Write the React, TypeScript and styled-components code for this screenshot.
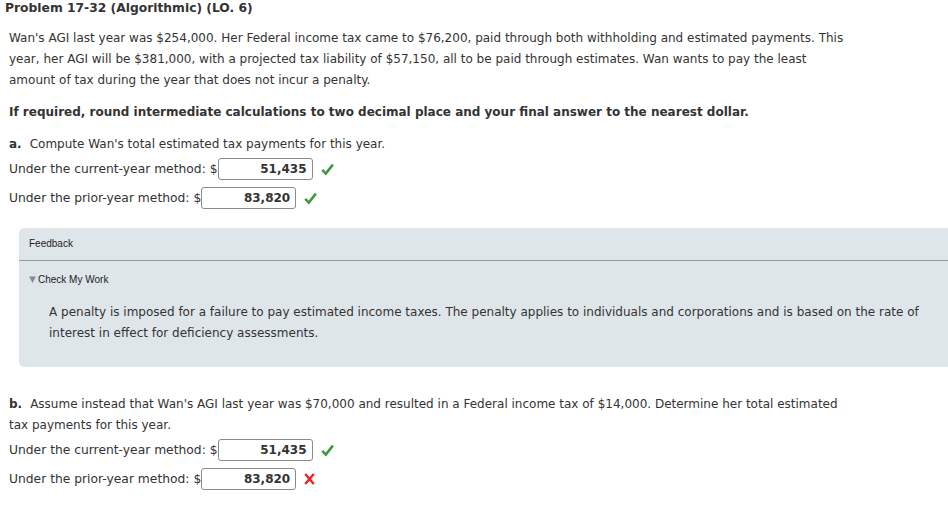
import styled, { createGlobalStyle } from 'styled-components'

const GlobalStyle = createGlobalStyle`
  html, body {
    margin: 0;
    padding: 0;
    background: #ffffff;
    overflow: hidden;
  }
  body {
    font-family: Verdana, "DejaVu Sans", sans-serif;
    color: #333333;
    font-size: 12px;
  }
`

const Page = styled.div`
  width: 948px;
  height: 507px;
  overflow: hidden;
`

const Title = styled.h1`
  margin: 0;
  padding: 1px 0 0 5px;
  font-size: 12.3px;
  line-height: 14px;
  font-weight: bold;
  color: #333333;
`

const Body = styled.div`
  padding: 0 0 0 9px;
`

const Paragraph = styled.p<{ $top?: number; $width?: number }>`
  margin: ${props => props.$top ?? 0}px 0 0 0;
  max-width: ${props => props.$width ?? 840}px;
  line-height: 21px;
  font-size: 12px;
`

const Bold = styled.span`
  font-weight: bold;
`

const PartLabel = styled.span`
  font-weight: bold;
  margin-right: 8px;
`

const AnswerRow = styled.div<{ $top?: number }>`
  display: flex;
  align-items: center;
  height: 22px;
  margin-top: ${props => props.$top ?? 7}px;
  line-height: 22px;
`

const Label = styled.span`
  white-space: pre;
  font-size: 12.3px;
`

const AnswerBox = styled.span`
  display: inline-block;
  box-sizing: border-box;
  width: 95px;
  height: 22px;
  border: 1px solid #8a8a8a;
  border-radius: 3px;
  padding: 0 5px;
  text-align: right;
  font-weight: bold;
  line-height: 20px;
  color: #333333;
  background: #ffffff;
`

const Mark = styled.span`
  display: inline-flex;
  align-items: center;
  margin-left: 8px;
`

const FeedbackPanel = styled.section`
  margin: 19px -20px 0 19px;
  background: #dfe6ea;
  border-radius: 5px;
  height: 139px;
  box-sizing: border-box;
  font-family: Arial, "Liberation Sans", sans-serif;
`

const FeedbackHeader = styled.div`
  height: 33px;
  box-sizing: border-box;
  padding: 10px 0 0 10px;
  font-size: 10px;
  line-height: 12px;
  color: #222222;
  border-bottom: 1px solid #999999;
`

const Toggle = styled.div`
  display: flex;
  align-items: center;
  gap: 2px;
  padding: 13px 0 0 10px;
  font-size: 10px;
  line-height: 12px;
  color: #222222;
`

const Triangle = styled.svg`
  margin-top: -1px;
`

const FeedbackText = styled.p`
  margin: 16px 0 0 30px;
  max-width: 885px;
  font-family: Verdana, "DejaVu Sans", sans-serif;
  font-size: 12px;
  line-height: 21px;
  color: #333333;
`

const Check = () => (
  <svg width="13" height="13" viewBox="0 0 13 13">
    <path d="M1.2 6.8 L4.8 10.6 L11.9 1.6" fill="none" stroke="#3c9a3c" strokeWidth="2.6" strokeLinejoin="miter" />
  </svg>
)

const Cross = () => (
  <svg width="11" height="12" viewBox="0 0 11 12">
    <path d="M1.2 1 L9.8 11 M9.8 1 L1.2 11" fill="none" stroke="#ee2222" strokeWidth="2.4" />
  </svg>
)

interface IAnswer {
  label: string
  value: string
  ok: boolean
  top?: number
}

function Answer({ label, value, ok, top }: IAnswer) {
  return (
    <AnswerRow $top={top}>
      <Label>{label} $</Label>
      <AnswerBox>{value}</AnswerBox>
      <Mark>{ok ? <Check /> : <Cross />}</Mark>
    </AnswerRow>
  )
}

export default function App() {
  return (
    <Page>
      <GlobalStyle />
      <Title>Problem 17-32 (Algorithmic) (LO. 6)</Title>
      <Body>
        <Paragraph $top={13}>
          Wan's AGI last year was $254,000. Her Federal income tax came to $76,200, paid through both withholding and
          estimated payments. This year, her AGI will be $381,000, with a projected tax liability of $57,150, all to be
          paid through estimates. Wan wants to pay the least amount of tax during the year that does not incur a penalty.
        </Paragraph>
        <Paragraph $top={11}>
          <Bold>If required, round intermediate calculations to two decimal place and your final answer to the nearest dollar.</Bold>
        </Paragraph>
        <Paragraph $top={11}>
          <PartLabel>a.</PartLabel>Compute Wan's total estimated tax payments for this year.
        </Paragraph>
        <Answer label="Under the current-year method:" value="51,435" ok top={3} />
        <Answer label="Under the prior-year method:" value="83,820" ok top={7} />
      </Body>
      <FeedbackPanel>
        <FeedbackHeader>Feedback</FeedbackHeader>
        <Toggle>
          <Triangle width="7" height="7" viewBox="0 0 7 7">
            <path d="M0 0.5 H7 L3.5 7 Z" fill="#8a8a8a" />
          </Triangle>
          Check My Work
        </Toggle>
        <FeedbackText>
          A penalty is imposed for a failure to pay estimated income taxes. The penalty applies to individuals and
          corporations and is based on the rate of interest in effect for deficiency assessments.
        </FeedbackText>
      </FeedbackPanel>
      <Body>
        <Paragraph $top={27}>
          <PartLabel>b.</PartLabel>Assume instead that Wan's AGI last year was $70,000 and resulted in a Federal income
          tax of $14,000. Determine her total estimated tax payments for this year.
        </Paragraph>
        <Answer label="Under the current-year method:" value="51,435" ok top={3} />
        <Answer label="Under the prior-year method:" value="83,820" ok={false} top={7} />
      </Body>
    </Page>
  )
}
